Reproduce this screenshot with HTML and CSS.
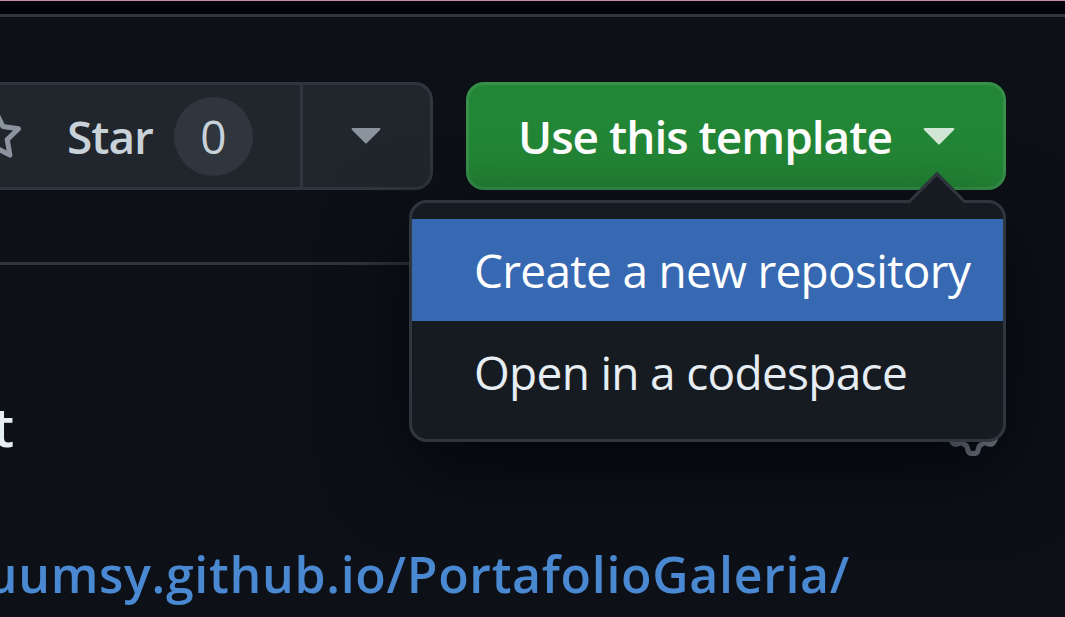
FILE: index.html
```html
<!DOCTYPE html>
<html lang="en">
<head>
<meta charset="utf-8">
<title>Repository</title>
<link rel="stylesheet" href="styles.css">
</head>
<body>
<div class="topline"></div>
<header class="appbar"></header>
<main class="page">
  <section class="repohead">
    <div class="actions">
      <div class="btngroup">
        <button class="star-btn" type="button">
          <svg class="star-icon" viewBox="0 0 16 16" width="54" height="54" aria-hidden="true"><path fill="#8b949e" d="M8 .25a.75.75 0 0 1 .673.418l1.882 3.815 4.21.612a.75.75 0 0 1 .416 1.279l-3.046 2.97.719 4.192a.751.751 0 0 1-1.088.791L8 12.347l-3.766 1.98a.75.75 0 0 1-1.088-.79l.72-4.194L.818 6.374a.75.75 0 0 1 .416-1.28l4.21-.611L7.327.668A.75.75 0 0 1 8 .25Zm0 2.445L6.615 5.5a.75.75 0 0 1-.564.41l-3.097.45 2.24 2.184a.75.75 0 0 1 .216.664l-.528 3.084 2.769-1.456a.75.75 0 0 1 .698 0l2.77 1.456-.53-3.084a.75.75 0 0 1 .216-.664l2.24-2.183-3.096-.45a.75.75 0 0 1-.564-.41L8 2.694Z"/></svg>
          <span class="star-label">Star</span>
          <span class="counter">0</span>
        </button>
        <button class="caret-btn" type="button" aria-label="Add this repository to a list">
          <svg class="caret" viewBox="0 0 30 16" width="30" height="16" aria-hidden="true"><path fill="#8b949e" d="M1.5 0h27a1 1 0 0 1 .7 1.7L15.7 15.3a1 1 0 0 1-1.4 0L.8 1.7A1 1 0 0 1 1.5 0Z"/></svg>
        </button>
      </div>
      <div class="template-wrap">
        <button class="btn-primary" type="button">
          <span>Use this template</span>
          <svg class="caret caret-light" viewBox="0 0 30 16" width="32" height="17" aria-hidden="true"><path fill="#d3e7d7" d="M1.5 0h27a1 1 0 0 1 .7 1.7L15.7 15.3a1 1 0 0 1-1.4 0L.8 1.7A1 1 0 0 1 1.5 0Z"/></svg>
        </button>
        <div class="menu" role="menu">
          <span class="menu-arrow"></span>
          <a class="menu-item active" href="#" role="menuitem">Create a new repository</a>
          <a class="menu-item" href="#" role="menuitem">Open in a codespace</a>
        </div>
      </div>
    </div>
  </section>
  <section class="about">
    <div class="about-head">
      <div class="about-title"><h2>About</h2></div>
      <svg class="gear" viewBox="0 0 16 16" width="54" height="54" aria-hidden="true"><path fill="#8b949e" d="M8 0a8.2 8.2 0 0 1 .701.031C9.444.095 9.99.645 10.16 1.29l.288 1.107c.018.066.079.158.212.224.231.114.454.243.668.386.123.082.233.09.299.071l1.103-.303c.644-.176 1.392.021 1.82.63.27.385.506.792.704 1.218.315.675.111 1.422-.364 1.891l-.814.806c-.049.048-.098.147-.088.294.016.257.016.515 0 .772-.01.147.038.246.088.294l.814.806c.475.469.679 1.216.364 1.891a7.977 7.977 0 0 1-.704 1.217c-.428.61-1.176.807-1.82.63l-1.102-.302c-.067-.019-.177-.011-.3.071a5.909 5.909 0 0 1-.668.386c-.133.066-.194.158-.211.224l-.29 1.106c-.168.646-.715 1.196-1.458 1.26a8.006 8.006 0 0 1-1.402 0c-.743-.064-1.289-.614-1.458-1.260l-.289-1.106c-.018-.066-.079-.158-.212-.224a5.738 5.738 0 0 1-.668-.386c-.123-.082-.233-.09-.299-.071l-1.103.303c-.644.176-1.392-.021-1.820-.63a8.12 8.12 0 0 1-.704-1.218c-.315-.675-.111-1.422.363-1.891l.815-.806c.05-.048.098-.147.088-.294a6.214 6.214 0 0 1 0-.772c.01-.147-.038-.246-.088-.294l-.815-.806C.635 6.045.431 5.298.746 4.623a7.92 7.92 0 0 1 .704-1.217c.428-.61 1.176-.807 1.82-.63l1.102.302c.067.019.177.011.3-.071.214-.143.437-.272.668-.386.133-.066.194-.158.211-.224l.29-1.106C6.009.645 6.556.095 7.299.03 7.53.01 7.764 0 8 0Zm-.571 1.525c-.036.003-.108.036-.137.146l-.289 1.105c-.147.561-.549.967-.998 1.189-.173.086-.34.183-.5.29-.417.278-.97.423-1.529.27l-1.103-.303c-.109-.03-.175.016-.195.045-.22.312-.412.644-.573.99-.014.031-.021.11.059.19l.815.806c.411.406.562.957.53 1.456a4.709 4.709 0 0 0 0 .582c.032.499-.119 1.05-.53 1.456l-.815.806c-.081.08-.073.159-.059.19.162.346.353.677.573.989.02.03.085.076.195.046l1.102-.303c.56-.153 1.113-.008 1.53.27.161.107.328.204.501.29.447.222.85.629.997 1.189l.289 1.105c.029.109.101.143.137.146a6.6 6.6 0 0 0 1.142 0c.036-.003.108-.036.137-.146l.289-1.105c.147-.561.549-.967.998-1.189.173-.086.34-.183.5-.29.417-.278.97-.423 1.529-.27l1.103.303c.109.029.175-.016.195-.045.22-.313.411-.644.573-.99.014-.031.021-.11-.059-.19l-.815-.806c-.411-.406-.562-.957-.53-1.456a4.709 4.709 0 0 0 0-.582c-.032-.499.119-1.05.53-1.456l.815-.806c.081-.08.073-.159.059-.19a6.464 6.464 0 0 0-.573-.989c-.02-.03-.085-.076-.195-.046l-1.102.303c-.56.153-1.113.008-1.53-.27a4.44 4.44 0 0 0-.501-.29c-.447-.222-.85-.629-.997-1.189l-.289-1.105c-.029-.11-.101-.143-.137-.146a6.6 6.6 0 0 0-1.142 0ZM11 8a3 3 0 1 1-6 0 3 3 0 0 1 6 0ZM9.5 8a1.5 1.5 0 1 0-3.001.001A1.5 1.5 0 0 0 9.5 8Z"/></svg>
    </div>
    <div class="homepage-row">
      <a class="homepage" href="#">uumsy.github.io/PortafolioGaleria/</a>
    </div>
  </section>
</main>
</body>
</html>
```
FILE: styles.css
```css
* { box-sizing: border-box; }

html, body {
  margin: 0;
  padding: 0;
}

body {
  width: 1065px;
  height: 617px;
  overflow: hidden;
  background: #0d1117;
  color: #e6edf3;
  font-family: "Open Sans", "Noto Sans", sans-serif;
}

.topline {
  height: 1px;
  background: #c48c9f;
}

.appbar {
  height: 16px;
  background: #010409;
  border-bottom: 3px solid #30363d;
}

.repohead {
  height: 248px;
  margin-right: 59px;
  padding-top: 65px;
  border-bottom: 3px solid #30363d;
}

.actions {
  display: flex;
  justify-content: flex-end;
  align-items: flex-start;
  gap: 33px;
}

button {
  font: inherit;
  margin: 0;
  cursor: pointer;
}

.btngroup {
  flex-shrink: 0;
  display: flex;
  height: 108px;
  border: 3px solid #30363d;
  border-radius: 18px;
  background: #21262d;
  overflow: hidden;
}

.star-btn {
  display: flex;
  align-items: center;
  padding: 0 47px 0 40px;
  border: 0;
  background: transparent;
  color: #c9d1d9;
  font-size: 46px;
  font-weight: 600;
  letter-spacing: -1px;
}

.star-icon {
  flex-shrink: 0;
  margin-right: 44px;
}

.star-label {
  white-space: nowrap;
}

.counter {
  display: flex;
  align-items: center;
  justify-content: center;
  width: 79px;
  height: 79px;
  margin-left: 21px;
  border-radius: 50%;
  background: #30363d;
  color: #c9d1d9;
  font-size: 46px;
  font-weight: 500;
  letter-spacing: 0;
}

.caret-btn {
  display: flex;
  align-items: center;
  justify-content: center;
  width: 130px;
  padding: 0;
  border: 0;
  border-left: 3px solid #30363d;
  background: transparent;
}

.template-wrap {
  position: relative;
  flex-shrink: 0;
}

.btn-primary {
  display: flex;
  align-items: center;
  height: 108px;
  padding: 0 48px 0 49px;
  border: 3px solid rgba(240, 246, 252, 0.1);
  border-radius: 18px;
  background: #238636;
  color: #ffffff;
  font-size: 46px;
  font-weight: 600;
  letter-spacing: -1px;
  white-space: nowrap;
}

.caret-light {
  margin-left: 31px;
}

.menu {
  position: absolute;
  top: calc(100% + 10px);
  right: 0;
  z-index: 10;
  width: 597px;
  padding: 16px 0;
  background: #161b22;
  border: 3px solid #30363d;
  border-radius: 18px;
  box-shadow: 0 27px 82px rgba(1, 4, 9, 0.8);
}

.menu-arrow {
  position: absolute;
  top: -31px;
  right: 39px;
  width: 58px;
  height: 31px;
  overflow: hidden;
}

.menu-arrow::before {
  content: "";
  position: absolute;
  left: 8.5px;
  top: 8.5px;
  width: 41px;
  height: 41px;
  background: #161b22;
  border-top: 3px solid #30363d;
  border-left: 3px solid #30363d;
  transform: rotate(45deg);
}

.menu-item {
  display: block;
  height: 102px;
  line-height: 102px;
  padding-left: 62px;
  color: #e6edf3;
  font-size: 46px;
  letter-spacing: -0.7px;
  text-decoration: none;
  white-space: nowrap;
}

.menu-item.active {
  background: #3768b2;
  color: #ffffff;
}

.about {
  margin-right: 59px;
  padding-top: 124px;
}

.about-head {
  display: flex;
  align-items: center;
  justify-content: space-between;
  height: 74px;
}

.about-title {
  display: flex;
  justify-content: flex-end;
  width: 14px;
}

.about-title h2 {
  margin: 0;
  font-size: 54px;
  line-height: 72px;
  font-weight: 600;
  color: #e6edf3;
  white-space: nowrap;
}

.gear {
  flex-shrink: 0;
  margin-top: 6px;
  margin-right: 6px;
}

.homepage-row {
  display: flex;
  justify-content: flex-end;
  width: 850px;
  margin-top: 77px;
}

.homepage {
  font-size: 50px;
  line-height: 68px;
  font-weight: 600;
  letter-spacing: 0.7px;
  color: #4a89d2;
  text-decoration: none;
  white-space: nowrap;
}
```
